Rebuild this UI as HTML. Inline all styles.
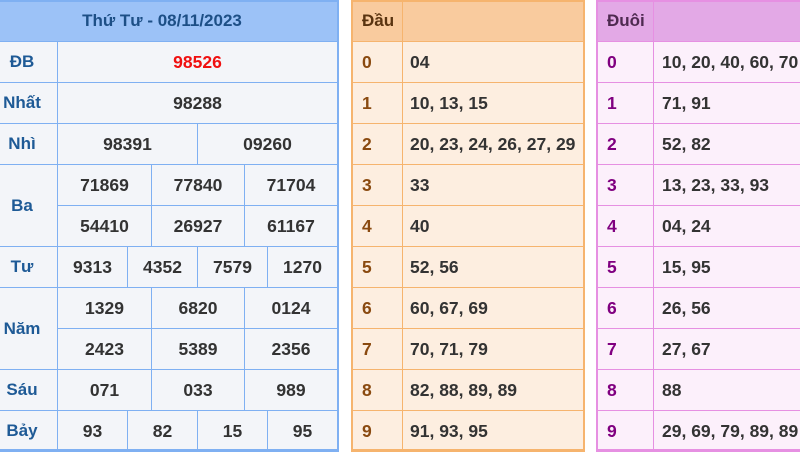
<!DOCTYPE html><html><head><meta charset="utf-8"><style>
body{margin:0;width:800px;height:452px;overflow:hidden;background:#fff;font-family:"Liberation Sans",Arial,sans-serif;font-weight:bold;font-size:17.5px;color:#333}
.c{position:absolute;box-sizing:border-box;display:flex;align-items:center;justify-content:center;white-space:nowrap}
.L .c{border:1px solid #7fb0f2;background:#f3f5f9}
.L .h{background:#9cc2f7;color:#1d4f86;font-size:17px}
.L .lb{color:#1e5a96;font-size:17px}
.O .c{border:1px solid #f6b46e;background:#fdeee0;justify-content:flex-start;padding-left:9px}
.O .v{padding-left:7px}
.O .h{background:#f9cb9e;color:#5a3410;font-size:17px}
.O .k{color:#8a4a10}
.P .c{border:1px solid #e690e2;background:#fcf0fb;justify-content:flex-start;padding-left:9px}
.P .v{padding-left:8px}
.P .h{background:#e3a9e6;color:#4e2a50;font-size:17px}
.P .k{color:#800080}
.fr{position:absolute;box-sizing:border-box;pointer-events:none}
</style></head><body>
<div class="L">
<div class="c h" style="left:-14px;top:0;width:352px;height:42px">Thứ Tư - 08/11/2023</div>
<div class="c lb" style="left:-14px;top:41px;width:72px;height:42px">ĐB</div><div class="c" style="left:57px;top:41px;width:281px;height:42px;color:#f01010">98526</div>
<div class="c lb" style="left:-14px;top:82px;width:72px;height:42px">Nhất</div><div class="c" style="left:57px;top:82px;width:281px;height:42px">98288</div>
<div class="c lb" style="left:-14px;top:123px;width:72px;height:42px">Nhì</div><div class="c" style="left:57px;top:123px;width:141px;height:42px">98391</div><div class="c" style="left:197px;top:123px;width:141px;height:42px">09260</div>
<div class="c lb" style="left:-14px;top:164px;width:72px;height:83px">Ba</div>
<div class="c" style="left:57px;top:164px;width:95px;height:42px">71869</div><div class="c" style="left:151px;top:164px;width:94px;height:42px">77840</div><div class="c" style="left:244px;top:164px;width:94px;height:42px">71704</div>
<div class="c" style="left:57px;top:205px;width:95px;height:42px">54410</div><div class="c" style="left:151px;top:205px;width:94px;height:42px">26927</div><div class="c" style="left:244px;top:205px;width:94px;height:42px">61167</div>
<div class="c lb" style="left:-14px;top:246px;width:72px;height:42px">Tư</div>
<div class="c" style="left:57px;top:246px;width:71px;height:42px">9313</div><div class="c" style="left:127px;top:246px;width:71px;height:42px">4352</div><div class="c" style="left:197px;top:246px;width:71px;height:42px">7579</div><div class="c" style="left:267px;top:246px;width:71px;height:42px">1270</div>
<div class="c lb" style="left:-14px;top:287px;width:72px;height:83px">Năm</div>
<div class="c" style="left:57px;top:287px;width:95px;height:42px">1329</div><div class="c" style="left:151px;top:287px;width:94px;height:42px">6820</div><div class="c" style="left:244px;top:287px;width:94px;height:42px">0124</div>
<div class="c" style="left:57px;top:328px;width:95px;height:42px">2423</div><div class="c" style="left:151px;top:328px;width:94px;height:42px">5389</div><div class="c" style="left:244px;top:328px;width:94px;height:42px">2356</div>
<div class="c lb" style="left:-14px;top:369px;width:72px;height:42px">Sáu</div>
<div class="c" style="left:57px;top:369px;width:95px;height:42px">071</div><div class="c" style="left:151px;top:369px;width:94px;height:42px">033</div><div class="c" style="left:244px;top:369px;width:94px;height:42px">989</div>
<div class="c lb" style="left:-14px;top:410px;width:72px;height:42px">Bảy</div>
<div class="c" style="left:57px;top:410px;width:71px;height:42px">93</div><div class="c" style="left:127px;top:410px;width:71px;height:42px">82</div><div class="c" style="left:197px;top:410px;width:71px;height:42px">15</div><div class="c" style="left:267px;top:410px;width:71px;height:42px">95</div>
<div class="fr" style="left:-14px;top:0;width:353px;height:452px;border:2px solid #7fb0f2;border-bottom-width:3px"></div>
</div>

<div class="O">
<div class="c h" style="left:352px;top:0;width:51px;height:42px">Đầu</div><div class="c h" style="left:402px;top:0;width:182px;height:42px"></div>
<div class="c k" style="left:352px;top:41px;width:51px;height:42px">0</div><div class="c v" style="left:402px;top:41px;width:182px;height:42px">04</div>
<div class="c k" style="left:352px;top:82px;width:51px;height:42px">1</div><div class="c v" style="left:402px;top:82px;width:182px;height:42px">10, 13, 15</div>
<div class="c k" style="left:352px;top:123px;width:51px;height:42px">2</div><div class="c v" style="left:402px;top:123px;width:182px;height:42px">20, 23, 24, 26, 27, 29</div>
<div class="c k" style="left:352px;top:164px;width:51px;height:42px">3</div><div class="c v" style="left:402px;top:164px;width:182px;height:42px">33</div>
<div class="c k" style="left:352px;top:205px;width:51px;height:42px">4</div><div class="c v" style="left:402px;top:205px;width:182px;height:42px">40</div>
<div class="c k" style="left:352px;top:246px;width:51px;height:42px">5</div><div class="c v" style="left:402px;top:246px;width:182px;height:42px">52, 56</div>
<div class="c k" style="left:352px;top:287px;width:51px;height:42px">6</div><div class="c v" style="left:402px;top:287px;width:182px;height:42px">60, 67, 69</div>
<div class="c k" style="left:352px;top:328px;width:51px;height:42px">7</div><div class="c v" style="left:402px;top:328px;width:182px;height:42px">70, 71, 79</div>
<div class="c k" style="left:352px;top:369px;width:51px;height:42px">8</div><div class="c v" style="left:402px;top:369px;width:182px;height:42px">82, 88, 89, 89</div>
<div class="c k" style="left:352px;top:410px;width:51px;height:42px">9</div><div class="c v" style="left:402px;top:410px;width:182px;height:42px">91, 93, 95</div>
<div class="fr" style="left:351px;top:0;width:234px;height:452px;border:2px solid #f6b46e;border-bottom-width:3px"></div>
</div>

<div class="P">
<div class="c h" style="left:597px;top:0;width:57px;height:42px">Đuôi</div><div class="c h" style="left:653px;top:0;width:150px;height:42px"></div>
<div class="c k" style="left:597px;top:41px;width:57px;height:42px">0</div><div class="c v" style="left:653px;top:41px;width:150px;height:42px">10, 20, 40, 60, 70</div>
<div class="c k" style="left:597px;top:82px;width:57px;height:42px">1</div><div class="c v" style="left:653px;top:82px;width:150px;height:42px">71, 91</div>
<div class="c k" style="left:597px;top:123px;width:57px;height:42px">2</div><div class="c v" style="left:653px;top:123px;width:150px;height:42px">52, 82</div>
<div class="c k" style="left:597px;top:164px;width:57px;height:42px">3</div><div class="c v" style="left:653px;top:164px;width:150px;height:42px">13, 23, 33, 93</div>
<div class="c k" style="left:597px;top:205px;width:57px;height:42px">4</div><div class="c v" style="left:653px;top:205px;width:150px;height:42px">04, 24</div>
<div class="c k" style="left:597px;top:246px;width:57px;height:42px">5</div><div class="c v" style="left:653px;top:246px;width:150px;height:42px">15, 95</div>
<div class="c k" style="left:597px;top:287px;width:57px;height:42px">6</div><div class="c v" style="left:653px;top:287px;width:150px;height:42px">26, 56</div>
<div class="c k" style="left:597px;top:328px;width:57px;height:42px">7</div><div class="c v" style="left:653px;top:328px;width:150px;height:42px">27, 67</div>
<div class="c k" style="left:597px;top:369px;width:57px;height:42px">8</div><div class="c v" style="left:653px;top:369px;width:150px;height:42px">88</div>
<div class="c k" style="left:597px;top:410px;width:57px;height:42px">9</div><div class="c v" style="left:653px;top:410px;width:150px;height:42px">29, 69, 79, 89, 89</div>
<div class="fr" style="left:596px;top:0;width:210px;height:452px;border:2px solid #e690e2;border-bottom-width:3px"></div>
</div>
</body></html>
